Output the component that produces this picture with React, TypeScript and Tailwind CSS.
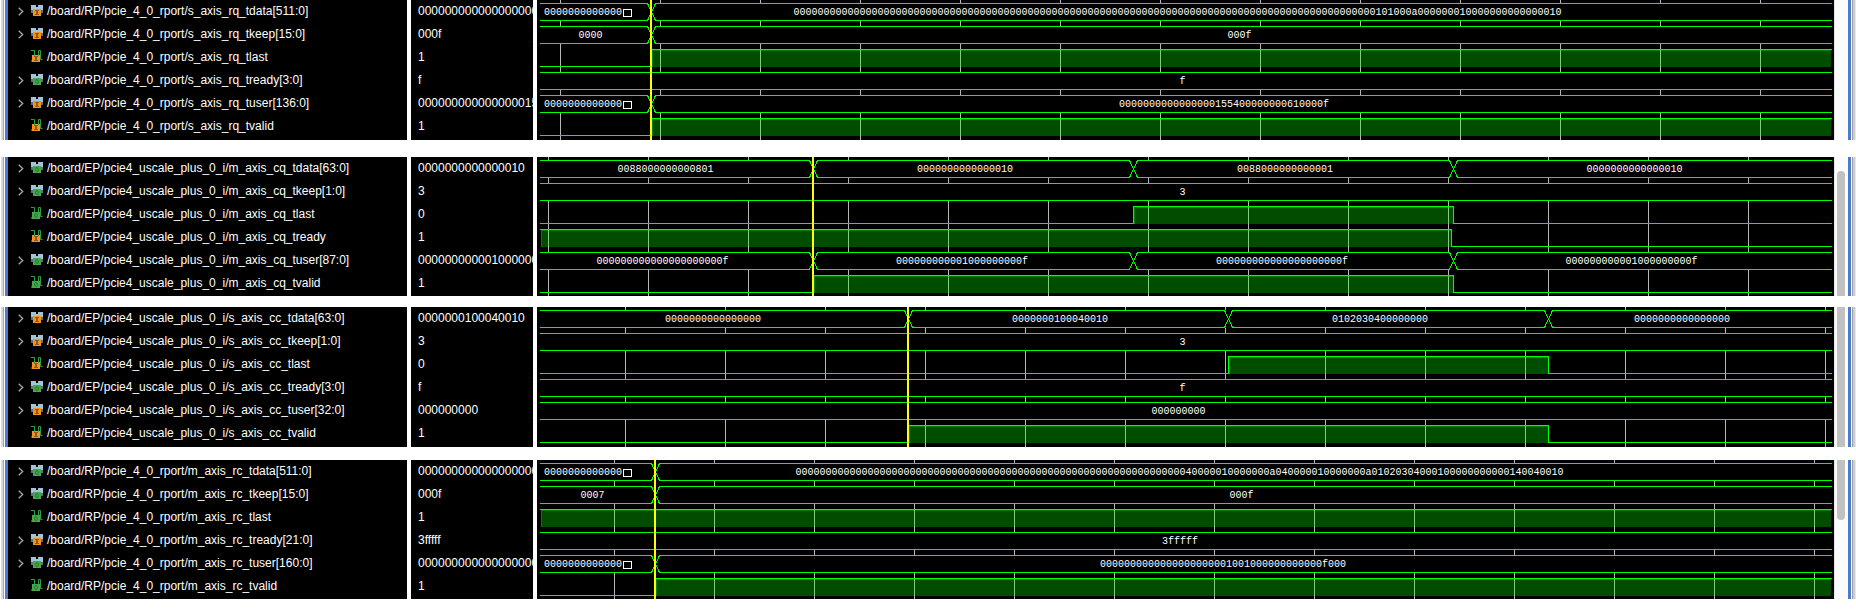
import React from "react";

const ROW = 23;
const WAVE_W = 1297;
const LEFT = 3;
const RIGHT = 1295;

type Dir = "in" | "out";
type Segment = { text: string; overflow?: boolean };
type Signal = {
  name: string;
  dir: Dir;
  value: string;
  bus?: { edges: number[]; segments: Segment[] };
  bit?: { rise: number; fall?: number };
};
type Panel = {
  id: string;
  extra: 1 | 2;
  gridStart: number;
  cursor: number;
  signals: Signal[];
  scroll: "none" | "start" | "middle" | "end";
};

const z = (n: number) => "0".repeat(n);

const RQ = "/board/RP/pcie_4_0_rport/s_axis_rq_";
const CQ = "/board/EP/pcie4_uscale_plus_0_i/m_axis_cq_";
const CC = "/board/EP/pcie4_uscale_plus_0_i/s_axis_cc_";
const RC = "/board/RP/pcie_4_0_rport/m_axis_rc_";

const rqData = ("101000a" + z(7) + "1" + z(14) + "10").padStart(128, "0");
const rqUser = z(16) + "1554" + z(8) + "610000f";
const rcData = (
  "4000001" + z(7) + "a04000001" + z(7) + "a010203040001" + z(11) + "140040010"
).padStart(128, "0");
const rcUser = z(21) + "1001" + z(12) + "f000";
const cqIdle = z(21) + "f";
const cqFirst = z(11) + "1" + z(9) + "f";

const panels: Panel[] = [
  {
    id: "rq",
    extra: 2,
    gridStart: 23,
    cursor: 113,
    scroll: "none",
    signals: [
      { name: RQ + "tdata[511:0]", dir: "in", value: rqData, bus: { edges: [114], segments: [{ text: z(13), overflow: true }, { text: rqData }] } },
      { name: RQ + "tkeep[15:0]", dir: "in", value: "000f", bus: { edges: [114], segments: [{ text: "0000" }, { text: "000f" }] } },
      { name: RQ + "tlast", dir: "in", value: "1", bit: { rise: 114 } },
      { name: RQ + "tready[3:0]", dir: "out", value: "f", bus: { edges: [], segments: [{ text: "f" }] } },
      { name: RQ + "tuser[136:0]", dir: "in", value: rqUser, bus: { edges: [114], segments: [{ text: z(13), overflow: true }, { text: rqUser }] } },
      { name: RQ + "tvalid", dir: "in", value: "1", bit: { rise: 114 } },
    ],
  },
  {
    id: "cq",
    extra: 1,
    gridStart: 11,
    cursor: 275,
    scroll: "start",
    signals: [
      {
        name: CQ + "tdata[63:0]",
        dir: "out",
        value: "0000000000000010",
        bus: {
          edges: [276, 596, 916],
          segments: [{ text: "0088000000000801" }, { text: "0000000000000010" }, { text: "0088000000000001" }, { text: "0000000000000010" }],
        },
      },
      { name: CQ + "tkeep[1:0]", dir: "out", value: "3", bus: { edges: [], segments: [{ text: "3" }] } },
      { name: CQ + "tlast", dir: "out", value: "0", bit: { rise: 596, fall: 916 } },
      { name: CQ + "tready", dir: "in", value: "1", bit: { rise: LEFT, fall: 914 } },
      {
        name: CQ + "tuser[87:0]",
        dir: "out",
        value: cqFirst,
        bus: { edges: [276, 596, 916], segments: [{ text: cqIdle }, { text: cqFirst }, { text: cqIdle }, { text: cqFirst }] },
      },
      { name: CQ + "tvalid", dir: "out", value: "1", bit: { rise: 276, fall: 916 } },
    ],
  },
  {
    id: "cc",
    extra: 2,
    gridStart: 88,
    cursor: 370,
    scroll: "middle",
    signals: [
      {
        name: CC + "tdata[63:0]",
        dir: "in",
        value: "0000000100040010",
        bus: {
          edges: [371, 691, 1011],
          segments: [{ text: z(16) }, { text: "0000000100040010" }, { text: "0102030400000000" }, { text: z(16) }],
        },
      },
      { name: CC + "tkeep[1:0]", dir: "in", value: "3", bus: { edges: [], segments: [{ text: "3" }] } },
      { name: CC + "tlast", dir: "in", value: "0", bit: { rise: 691, fall: 1011 } },
      { name: CC + "tready[3:0]", dir: "out", value: "f", bus: { edges: [], segments: [{ text: "f" }] } },
      { name: CC + "tuser[32:0]", dir: "in", value: z(9), bus: { edges: [], segments: [{ text: z(9) }] } },
      { name: CC + "tvalid", dir: "in", value: "1", bit: { rise: 371, fall: 1011 } },
    ],
  },
  {
    id: "rc",
    extra: 1,
    gridStart: 77,
    cursor: 117,
    scroll: "end",
    signals: [
      { name: RC + "tdata[511:0]", dir: "out", value: rcData, bus: { edges: [118], segments: [{ text: z(13), overflow: true }, { text: rcData }] } },
      { name: RC + "tkeep[15:0]", dir: "out", value: "000f", bus: { edges: [118], segments: [{ text: "0007" }, { text: "000f" }] } },
      { name: RC + "tlast", dir: "out", value: "1", bit: { rise: LEFT } },
      { name: RC + "tready[21:0]", dir: "in", value: "3fffff", bus: { edges: [], segments: [{ text: "3fffff" }] } },
      { name: RC + "tuser[160:0]", dir: "out", value: rcUser, bus: { edges: [118], segments: [{ text: z(13), overflow: true }, { text: rcUser }] } },
      { name: RC + "tvalid", dir: "out", value: "1", bit: { rise: 118 } },
    ],
  },
];

function PortMark({ dir, x }: { dir: Dir; x: number }) {
  return dir === "in" ? (
    <path d={`M${x - 2} 6h4v1h-1v3h1v1h-4v-1h1v-3h-1z`} fill="#8f5a1c" />
  ) : (
    <ellipse cx={x} cy="8.5" rx="1.4" ry="2" fill="none" stroke="#287a34" />
  );
}

function BusIcon({ dir }: { dir: Dir }) {
  return (
    <svg width="13" height="13" viewBox="0 0 13 13" className="mb-[2px] shrink-0" aria-hidden="true">
      <path d="M0 1h5v1h2v-1h5v6h-12z" fill="#a3c4d6" />
      <path d="M0 6h2v3h-2zM10 6h2v3h-2z" fill="#5c7078" />
      <path d="M5 1h2v2h-2z" fill="#000" />
      <rect x="2" y="5" width="8" height="7" fill={dir === "in" ? "#f5921e" : "#46a84b"} />
      <PortMark dir={dir} x={6} />
    </svg>
  );
}

function BitIcon({ dir }: { dir: Dir }) {
  return (
    <svg width="13" height="13" viewBox="0 0 13 13" className="mb-[2px] shrink-0" aria-hidden="true">
      <path d="M0 .5h3.500v5M7.500 6V.5h2V9.500h2" fill="none" stroke="#2f9e44" />
      <path d="M0 10h2v2h-2z" fill="#3c4f40" />
      <rect x="1" y="5" width="8" height="7" fill={dir === "in" ? "#f5921e" : "#46a84b"} />
      <path d="M3 4h1v2h-1zM7 4h1v2h-1z" fill="#2f9e44" />
      <PortMark dir={dir} x={5} />
    </svg>
  );
}

function NameRow({ signal }: { signal: Signal }) {
  return (
    <li className="flex h-[23px] items-center pl-[10px]">
      {signal.bus ? (
        <button type="button" aria-label={`Expand ${signal.name}`} className="h-[23px] w-[13px] shrink-0">
          <svg width="6" height="9" viewBox="0 0 6 9" aria-hidden="true">
            <path d="M.7 .7l4 3.800-4 3.800" fill="none" stroke="#a8a8a8" strokeWidth="1.300" />
          </svg>
        </button>
      ) : (
        <span className="w-[13px] shrink-0" />
      )}
      {signal.bus ? <BusIcon dir={signal.dir} /> : <BitIcon dir={signal.dir} />}
      <span className="pl-[3px] whitespace-nowrap">{signal.name}</span>
    </li>
  );
}

function BusTrace({ edges, y }: { edges: number[]; y: number }) {
  const top = y + 3;
  const bottom = y + 20;
  const starts = [LEFT, ...edges.map((e) => e + 4)];
  const ends = [...edges.map((e) => e - 3), RIGHT];
  return (
    <g>
      <rect x={LEFT} y={top} width={RIGHT - LEFT} height={18} fill="#000" />
      {starts.map((s, i) => (
        <g key={s} fill="#00ff00">
          <rect x={s} y={top} width={ends[i] - s} height="1" />
          <rect x={s} y={bottom} width={ends[i] - s} height="1" />
        </g>
      ))}
      {edges.map((e) => (
        <path
          key={e}
          d={`M${e - 3.5} ${top + 0.5}L${e + 4.5} ${bottom + 0.5}M${e + 4.5} ${top + 0.5}L${e - 3.5} ${bottom + 0.5}`}
          stroke="#00ff00"
          fill="none"
        />
      ))}
    </g>
  );
}

function BitTrace({ rise, fall, y }: { rise: number; fall?: number; y: number }) {
  const top = y + 3;
  const end = fall ?? RIGHT - 1;
  return (
    <g fill="#00ff00">
      <rect x={rise + 1} y={top + 1} width={end - rise - 1} height="17" fillOpacity="0.3" />
      <rect x={rise + 1} y={top + 1} width={end - rise - 1} height="1" fillOpacity="0.3" />
      <rect x={rise + 1} y={top + 2} width="1" height="16" fillOpacity="0.3" />
      <rect x={rise} y={top} width={(fall ?? RIGHT) - rise} height="1" />
      {rise > LEFT && (
        <>
          <rect x={LEFT} y={top + 17} width={rise - LEFT} height="1" />
          <rect x={rise} y={top} width="1" height="18" />
        </>
      )}
      {fall !== undefined && (
        <>
          <rect x={fall} y={top} width="1" height="18" />
          <rect x={fall} y={top + 17} width={RIGHT - fall} height="1" />
        </>
      )}
    </g>
  );
}

function Labels({ signal }: { signal: Signal }) {
  if (!signal.bus) return <div className="h-[23px]" />;
  const { edges, segments } = signal.bus;
  const bounds = [0, ...edges, RIGHT];
  return (
    <div className="flex h-[23px]">
      {segments.map((seg, i) => {
        const width = `${((bounds[i + 1] - bounds[i]) / WAVE_W) * 100}%`;
        if (seg.overflow) {
          return (
            <div key={i} className="flex shrink-0 items-center gap-px pt-[2px] pl-[7px] whitespace-nowrap" style={{ width }}>
              <span>{seg.text}</span>
              <span className="h-[8px] w-[9px] shrink-0 border border-white" />
            </div>
          );
        }
        return (
          <div key={i} className="flex shrink-0 items-center justify-center pt-[2px] whitespace-nowrap" style={{ width }}>
            <span style={{ paddingRight: seg.text.length + (i === 0 ? LEFT : 0) }}>{seg.text}</span>
          </div>
        );
      })}
    </div>
  );
}

function Waveform({ panel }: { panel: Panel }) {
  const height = ROW * 6 + panel.extra;
  const lines: number[] = [];
  for (let x = panel.gridStart; x < RIGHT; x += 100) lines.push(x);
  return (
    <div className="grid min-w-0 flex-1 overflow-hidden bg-black">
      <svg
        className="[grid-area:1/1] h-full w-full"
        viewBox={`0 0 ${WAVE_W} ${height}`}
        preserveAspectRatio="none"
        shapeRendering="crispEdges"
        role="img"
        aria-label={`Waveform ${panel.id}`}
      >
        {lines.map((x) => (
          <rect key={x} x={x} y="0" width="1" height={height} fill="#b8b8b8" />
        ))}
        {panel.signals.map((s, i) =>
          s.bus ? (
            <BusTrace key={s.name} edges={s.bus.edges} y={i * ROW} />
          ) : (
            <BitTrace key={s.name} rise={s.bit!.rise} fall={s.bit!.fall} y={i * ROW} />
          ),
        )}
        <rect x={panel.cursor} y="0" width="2" height={height} fill="#ffff00" />
      </svg>
      <div className="[grid-area:1/1] min-w-0 font-['Liberation_Mono',monospace] text-[10px] text-white">
        {panel.signals.map((s) => (
          <Labels key={s.name} signal={s} />
        ))}
      </div>
    </div>
  );
}

const thumbShape = {
  none: "hidden",
  start: "mt-[14px] flex-1 rounded-t-full",
  middle: "flex-1",
  end: "h-[60px] rounded-b-full",
};

function PanelView({ panel }: { panel: Panel }) {
  const pad = panel.extra === 2 ? "pb-[2px]" : "pb-px";
  return (
    <section className="flex bg-white">
      <div className="ml-px w-[2px] shrink-0 bg-[#dadada]" />
      <div className="mr-px w-px shrink-0 bg-[#a2a2a2]" />
      <div className="w-[3px] shrink-0 bg-[#4a7bd0]" />
      <ul className={`w-[399px] shrink-0 overflow-hidden bg-black text-xs leading-[23px] text-white ${pad}`}>
        {panel.signals.map((s) => (
          <NameRow key={s.name} signal={s} />
        ))}
      </ul>
      <ul className={`mx-1 w-[122px] shrink-0 overflow-hidden bg-black pl-[7px] text-xs leading-[23px] text-white ${pad}`}>
        {panel.signals.map((s) => (
          <li key={s.name} className="h-[23px] overflow-hidden whitespace-nowrap">
            {s.value.slice(0, 18)}
          </li>
        ))}
      </ul>
      <Waveform panel={panel} />
      <div className="flex w-[14px] shrink-0 flex-col border-x border-l-[#e6e6e6] border-r-white bg-[#fbfbfb] px-[2px]">
        <div className={`w-[8px] bg-[#c1c1c1] ${thumbShape[panel.scroll]}`} />
      </div>
      <div className="w-[3px] shrink-0 bg-[#4a7bd0]" />
      <div className="ml-px w-px shrink-0 bg-[#a2a2a2]" />
      <div className="w-[2px] shrink-0 bg-[#cdcdcd]" />
      <div className="w-px shrink-0 bg-[#e8e8e8]" />
    </section>
  );
}

export default function App() {
  return (
    <main className="flex min-h-screen flex-col bg-white font-['Liberation_Sans',Arial,sans-serif]">
      <PanelView panel={panels[0]} />
      <div className="h-[17px]" />
      <PanelView panel={panels[1]} />
      <div className="h-[11px]" />
      <PanelView panel={panels[2]} />
      <div className="h-[13px]" />
      <PanelView panel={panels[3]} />
    </main>
  );
}
